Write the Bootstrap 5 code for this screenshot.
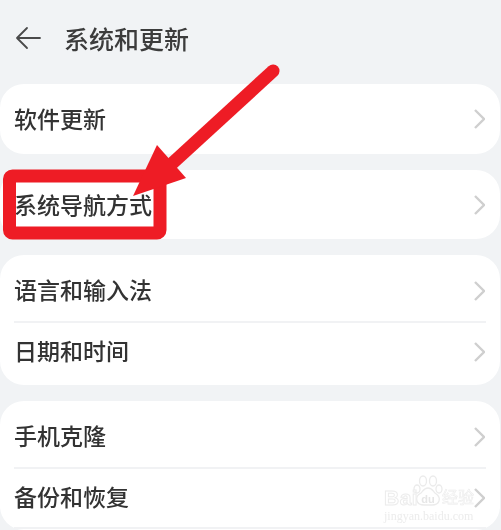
<!DOCTYPE html>
<html lang="zh"><head><meta charset="utf-8">
<link rel="stylesheet" href="https://cdn.jsdelivr.net/npm/bootstrap@5.3.0/dist/css/bootstrap.min.css">
<style>
html,body{height:530px;overflow:hidden}
body{background:#f1f3f5;font-family:"Noto Sans CJK SC","Liberation Sans",sans-serif;color:#333;position:relative}
.topbar{height:84px;padding:0 0 8px 15px;gap:23px}
.topbar h1{font-size:25px;font-weight:500;margin:0;color:#3c3c3c;filter:blur(.5px)}
.groups{gap:16px;padding-right:1px}
.panel{background:#fff;border-radius:24px;padding:0 14px}
.rowitem{height:69px;justify-content:space-between}
.tall .rowitem{height:70px}
.two .rowitem{height:60px}
.two{padding-top:6px;padding-bottom:4px}
.two.lastgroup{padding-bottom:0}
.two .rowitem.stub{height:3px}
.rowitem+.rowitem{border-top:2px solid #f1f2f4}
.rowitem span{font-size:23px;font-weight:500;color:#333;filter:blur(.5px);margin-top:-1px}
.two .rowitem span{margin-top:-4px}
.chev{width:11px;height:20px;flex:none;margin-right:1px;filter:blur(.7px)}
.overlay{position:absolute;left:0;top:0;pointer-events:none}
.wm{position:absolute;left:384px;top:487px;color:#fff;-webkit-text-stroke:1px #ececec;font-family:"Liberation Sans",sans-serif;line-height:1;white-space:nowrap;filter:blur(.5px)}
.wm b{font-size:21px;font-weight:700;letter-spacing:.5px}
.wm i{position:absolute;left:58px;top:1px;font-style:normal;font-size:16px;font-family:"Noto Sans CJK SC",sans-serif;-webkit-text-stroke:.6px #ececec}
.wm small{position:absolute;left:0;top:23px;font-size:12px;font-family:"Liberation Serif",serif;color:#ececec;-webkit-text-stroke:0}
.paw{filter:blur(.4px)}
</style></head><body>
<div class="topbar d-flex align-items-center">
<svg width="26" height="24" viewBox="0 0 26 24" fill="none" stroke="#4a4a4a" stroke-width="1.8" stroke-linecap="round" stroke-linejoin="round"><path d="M25 12H2M12 2 2 12l10 10"/></svg>
<h1>系统和更新</h1>
</div>
<div class="groups d-flex flex-column">
<div class="panel tall"><div class="rowitem d-flex align-items-center"><span>软件更新</span><svg class="chev" viewBox="0 0 11 20" fill="none" stroke="#cfcfcf" stroke-width="2.4"><path d="m1 1 9 9-9 9"/></svg></div></div>
<div class="panel"><div class="rowitem d-flex align-items-center"><span>系统导航方式</span><svg class="chev" viewBox="0 0 11 20" fill="none" stroke="#cfcfcf" stroke-width="2.4"><path d="m1 1 9 9-9 9"/></svg></div></div>
<div class="panel two"><div class="rowitem d-flex align-items-center"><span>语言和输入法</span><svg class="chev" viewBox="0 0 11 20" fill="none" stroke="#cfcfcf" stroke-width="2.4"><path d="m1 1 9 9-9 9"/></svg></div>
<div class="rowitem d-flex align-items-center"><span>日期和时间</span><svg class="chev" viewBox="0 0 11 20" fill="none" stroke="#cfcfcf" stroke-width="2.4"><path d="m1 1 9 9-9 9"/></svg></div></div>
<div class="panel two lastgroup"><div class="rowitem d-flex align-items-center"><span>手机克隆</span><svg class="chev" viewBox="0 0 11 20" fill="none" stroke="#cfcfcf" stroke-width="2.4"><path d="m1 1 9 9-9 9"/></svg></div>
<div class="rowitem d-flex align-items-center"><span>备份和恢复</span><svg class="chev" viewBox="0 0 11 20" fill="none" stroke="#cfcfcf" stroke-width="2.4"><path d="m1 1 9 9-9 9"/></svg></div>
<div class="rowitem stub"></div></div>
</div>
<svg class="overlay" width="501" height="530" viewBox="0 0 501 530">
<rect x="9.500" y="176" width="150.500" height="57" rx="3" fill="none" stroke="#ee1c25" stroke-width="13"/>
<path d="M273 71 165 170" stroke="#ee1c25" stroke-width="13" stroke-linecap="round" fill="none"/>
<path d="M157 145 133 196 186 178Z" fill="#ee1c25"/>
<g class="paw" fill="#fff" stroke="#ebebeb" stroke-width="1.300"><ellipse cx="423" cy="481" rx="3.500" ry="5"/><ellipse cx="433" cy="481" rx="3.500" ry="5"/><ellipse cx="417" cy="489" rx="3" ry="4"/><ellipse cx="439" cy="489" rx="3" ry="4"/><path d="M428 488c-4 0-5 3-7 5-4 2-5 5-4 8 1 3 4 4 7 4h8c3 0 6-1 7-4 1-3-1-6-4-8-2-2-3-5-7-5z"/></g>
<text class="paw" x="428" y="503" font-size="11" font-weight="700" text-anchor="middle" fill="#e6e6e6" font-family="Liberation Sans">du</text>
</svg>
<div class="wm"><b>Bai</b><i>经验</i><small>jingyan.baidu.com</small></div>
<script src="https://cdn.jsdelivr.net/npm/bootstrap@5.3.0/dist/js/bootstrap.bundle.min.js"></script>
</body></html>
